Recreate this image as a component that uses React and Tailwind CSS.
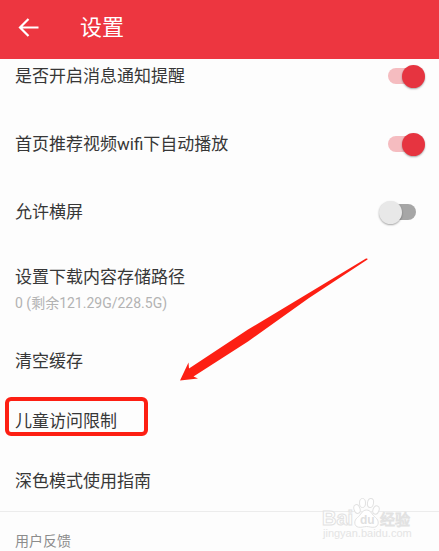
import { useState } from 'react';

const FONT = "font-['Roboto','Noto_Sans_CJK_SC',sans-serif]";

function SwitchRow({ id, label, initial }) {
  const [on, setOn] = useState(initial);
  return (
    <div className="flex h-[68px] items-center justify-between pr-[23px] pl-[15px]">
      <label htmlFor={id}>{label}</label>
      <input
        id={id}
        type="checkbox"
        role="switch"
        checked={on}
        onChange={() => setOn(!on)}
        className="flex h-4 w-7 shrink-0 appearance-none items-center rounded-full bg-[#a6a6a6] before:-ml-[9px] before:size-[23px] before:shrink-0 before:rounded-full before:bg-[#e8e8e8] before:shadow-[0_1px_2px_rgba(0,0,0,0.35)] before:content-[''] checked:bg-[#f5bcc0] checked:before:ml-[14px] checked:before:bg-[#e63440]"
      />
    </div>
  );
}

function LinkRow({ children, highlighted }) {
  return (
    <button type="button" className="relative flex h-[60px] w-full items-center pl-[15px] text-left">
      {children}
      {highlighted && (
        <span className="absolute top-[6px] left-[5px] h-[39px] w-[143px] rounded-md border-4 border-[#fd1f13]" />
      )}
    </button>
  );
}

function Arrow() {
  return (
    <svg
      className="pointer-events-none absolute top-[215px] left-[179px]"
      width="190"
      height="125"
      viewBox="0 0 190 125"
      fill="#fd1f13"
      aria-hidden="true"
    >
      <path d="M1 123.500 9.500 105.500 10 111.500 69 72.500 119 42.500 187 1.500Q189 1 188.500 2.500L130 41 69 84.500 14.500 119.500 19 121.500Z" />
    </svg>
  );
}

function Watermark() {
  return (
    <svg
      className="absolute right-[26px] bottom-1 overflow-visible"
      width="92"
      height="50"
      viewBox="0 0 92 50"
      fill="#fff"
      stroke="#e2e2e2"
      strokeWidth="1"
      aria-label="Baidu 经验 jingyan.baidu.com"
    >
      <text x="1" y="28" fontSize="20" fontWeight="700" className="font-['Liberation_Sans',sans-serif]">Bai</text>
      <ellipse cx="36" cy="12" rx="3" ry="4.500" transform="rotate(-18 36 12)" />
      <ellipse cx="41.500" cy="6" rx="3" ry="4.500" />
      <ellipse cx="49.500" cy="6" rx="3" ry="4.500" transform="rotate(10 49.500 6)" />
      <ellipse cx="55" cy="13" rx="3" ry="4.300" transform="rotate(20 55 13)" />
      <path d="M45.500 13C41 13 40 18 36.500 20.500C32.500 23.500 33 29.500 37.500 30.200C41 30.700 42.500 29.500 45.500 29.500C48.500 29.500 50 30.700 53.500 30.200C58 29.500 58.500 23.500 54.500 20.500C51 18 50 13 45.500 13Z" />
      <text x="39" y="27" fontSize="12" fontWeight="700" fill="#dfdfdf" stroke="none" className="font-['Liberation_Sans',sans-serif]">du</text>
      <text x="59" y="28" fontSize="15" fontWeight="400" className="font-['Noto_Sans_CJK_SC',sans-serif]">经验</text>
      <text x="2" y="40" fontSize="11" fill="#e4e4e4" stroke="none" className="font-['Liberation_Sans',sans-serif]">jingyan.baidu.com</text>
    </svg>
  );
}

export default function App() {
  return (
    <div className={`relative min-h-screen overflow-hidden bg-[#fdfdfd] text-[17px] leading-6 text-[#373737] ${FONT}`}>
      <header className="relative z-10 flex h-[59px] items-center gap-[41px] bg-[#ed3640] pb-1 pl-[18px] text-white">
        <button type="button" aria-label="返回">
          <svg width="21" height="20" viewBox="0 0 21 20" fill="none" stroke="currentColor" strokeWidth="2.200">
            <path d="M10.500 1 2 9.500 10.500 18M2 9.500H20.500" />
          </svg>
        </button>
        <h1 className="text-[22px] leading-8">设置</h1>
      </header>

      <main className="relative -mt-[17px]">
        <SwitchRow id="notify" label="是否开启消息通知提醒" initial={true} />
        <SwitchRow id="autoplay" label="首页推荐视频wifi下自动播放" initial={true} />
        <SwitchRow id="landscape" label="允许横屏" initial={false} />
        <button type="button" className="flex h-[85px] w-full flex-col items-start gap-1 pt-[19px] pl-[15px] text-left">
          <span>设置下载内容存储路径</span>
          <span className="text-[14px] leading-5 text-[#b3b3b3]">0 (剩余121.29G/228.5G)</span>
        </button>
        <LinkRow>清空缓存</LinkRow>
        <LinkRow highlighted>儿童访问限制</LinkRow>
        <LinkRow>深色模式使用指南</LinkRow>
        <section className="border-t border-[#ececec] pt-[19px] pl-[15px]">
          <h2 className="text-[14px] leading-5 text-[#8c8c8c]">用户反馈</h2>
        </section>
        <Arrow />
      </main>
      <Watermark />
    </div>
  );
}
